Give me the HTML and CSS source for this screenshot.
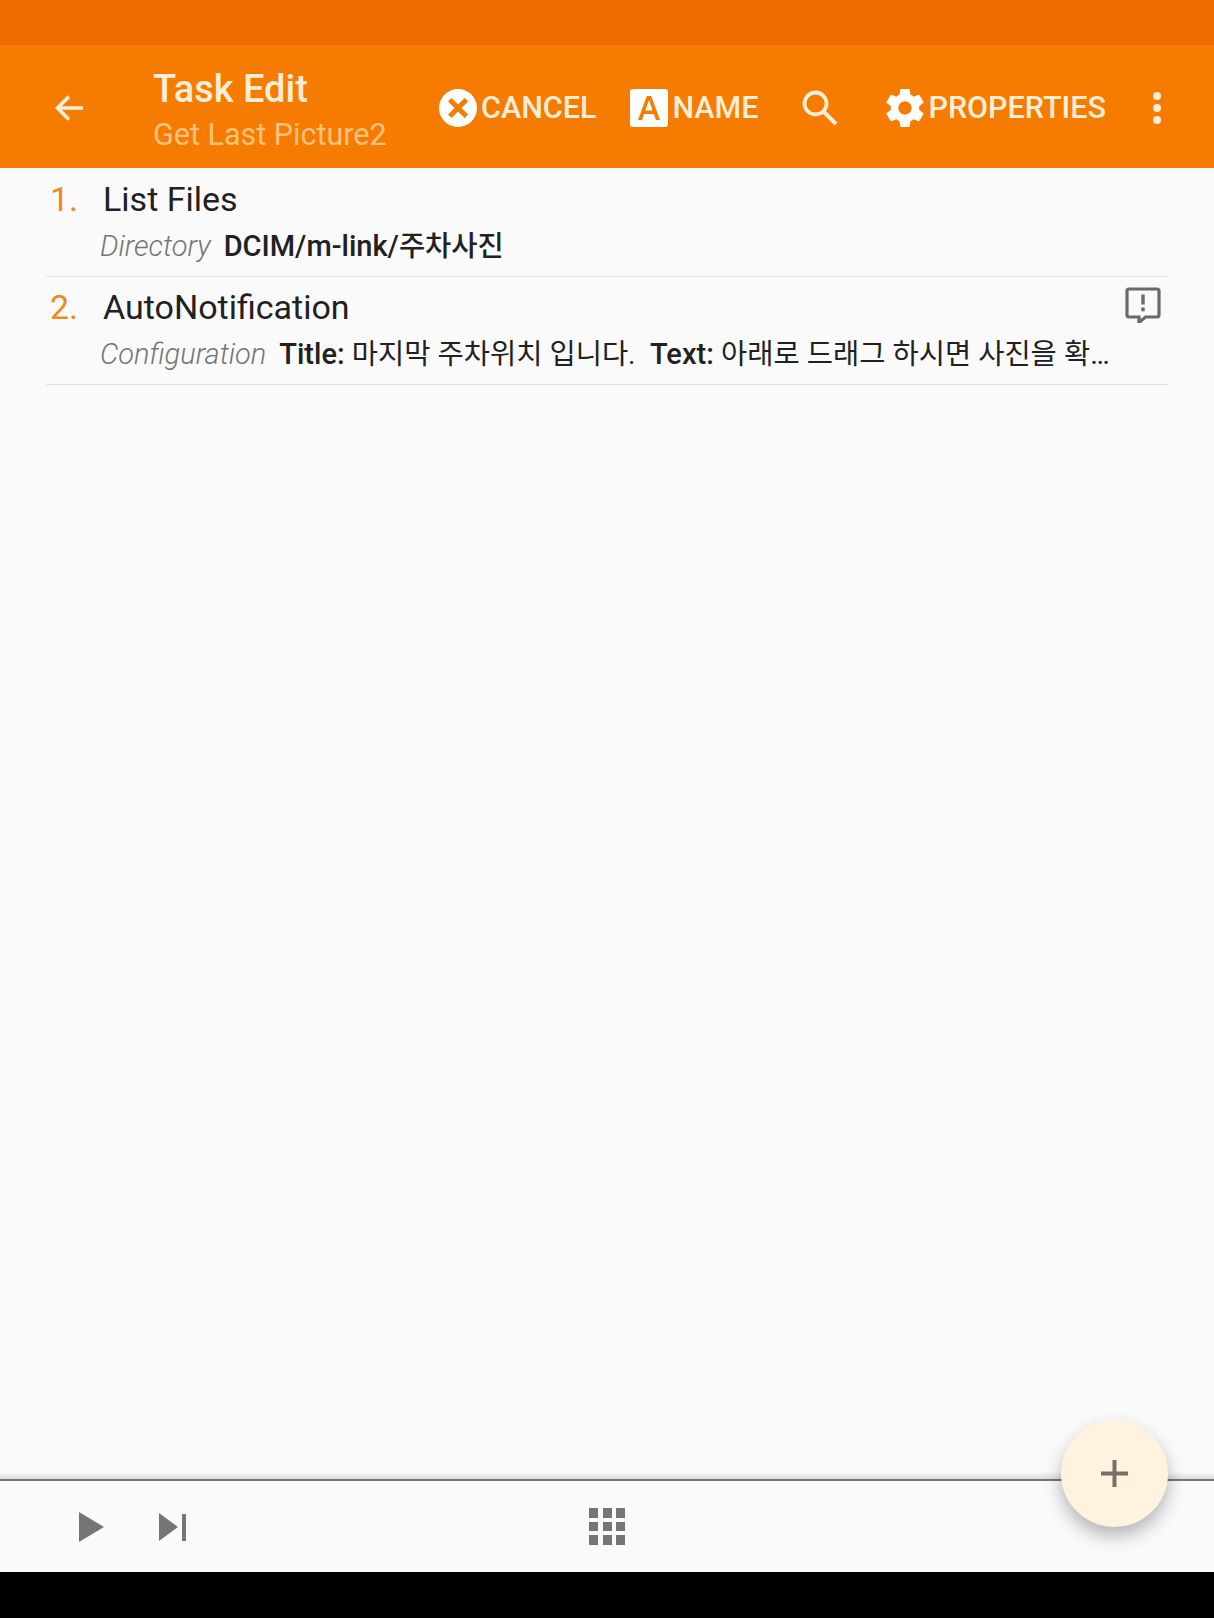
FILE: index.html
```html
<!DOCTYPE html>
<html lang="ko">
<head>
<meta charset="utf-8">
<title>Task Edit</title>
<link rel="stylesheet" href="styles.css">
</head>
<body>
<div class="screen">
  <div class="status"></div>
  <header class="toolbar">
    <svg class="back" viewBox="0 0 32 32"><path d="M29 16H4M15 4.500 3.500 16 15 27.500" fill="none" stroke="currentColor" stroke-width="3.600"/></svg>
    <div class="titles">
      <div class="title">Task Edit</div>
      <div class="subtitle">Get Last Picture2</div>
    </div>
    <div class="action act-cancel">
      <svg class="ico" viewBox="0 0 38 38"><path fill="#fff" fill-rule="evenodd" d="M19 0a19 19 0 1 0 0 38a19 19 0 1 0 0-38zM12.500 9 19 15.500 25.500 9 29 12.500 22.500 19 29 25.500 25.500 29 19 22.500 12.500 29 9 25.500 15.500 19 9 12.500z"/></svg>
      <span>CANCEL</span>
    </div>
    <div class="action act-name">
      <svg class="ico" viewBox="0 0 38 38"><path fill="#fff" fill-rule="evenodd" d="M3 0h32a3 3 0 0 1 3 3v32a3 3 0 0 1-3 3H3a3 3 0 0 1-3-3V3a3 3 0 0 1 3-3zM16.800 7 8 31h4l2.100-6h9.800l2.100 6h4L21.200 7zM15.400 21.500 19 11l3.600 10.500z"/></svg>
      <span>NAME</span>
    </div>
    <svg class="search" viewBox="0 0 36 36"><circle cx="13.500" cy="13.500" r="11" fill="none" stroke="currentColor" stroke-width="3.800"/><path d="M21.500 21.500 34 34" fill="none" stroke="currentColor" stroke-width="4"/></svg>
    <div class="action act-props">
      <svg class="ico" viewBox="2.400 2 19.200 20"><path fill="#fff" d="M19.430 12.980c.04-.32.07-.64.07-.98s-.03-.66-.07-.98l2.110-1.650c.19-.15.24-.42.12-.64l-2-3.460c-.12-.22-.39-.3-.61-.22l-2.490 1c-.52-.4-1.080-.73-1.690-.98l-.38-2.650A.488.488 0 0 0 14 2h-4c-.25 0-.46.180-.49.420l-.38 2.650c-.61.250-1.170.590-1.690.980l-2.490-1c-.23-.090-.49 0-.61.220l-2 3.460c-.13.220-.07.490.12.640l2.110 1.650c-.04.320-.07.650-.07.980s.03.660.07.980l-2.110 1.650c-.19.150-.24.420-.12.640l2 3.460c.12.220.39.300.61.220l2.490-1c.52.400 1.080.730 1.690.980l.38 2.650c.03.240.24.420.49.420h4c.25 0 .46-.180.49-.420l.38-2.650c.61-.250 1.170-.590 1.690-.980l2.490 1c.23.090.49 0 .61-.220l2-3.460c.12-.220.07-.490-.12-.640l-2.110-1.650zM12 15.500c-1.930 0-3.500-1.570-3.500-3.500s1.570-3.500 3.500-3.500 3.500 1.570 3.500 3.500-1.570 3.500-3.500 3.500z"/></svg>
      <span>PROPERTIES</span>
    </div>
    <div class="more"><i></i><i></i><i></i></div>
  </header>
  <main class="list">
    <section class="row">
      <div class="row-main">
        <div class="head"><span class="num">1.</span><span class="name">List Files</span></div>
        <div class="detail"><em>Directory</em><b>DCIM/m-link/<span class="ko">주차사진</span></b></div>
      </div>
      <div class="side"></div>
    </section>
    <section class="row">
      <div class="row-main">
        <div class="head"><span class="num">2.</span><span class="name">AutoNotification</span></div>
        <div class="detail"><em>Configuration</em><span class="clip"><b>Title:</b> <span class="ko">마지막 주차위치 입니다.</span>&nbsp; <b>Text:</b> <span class="ko">아래로 드래그 하시면 사진을 확인할 수 있습니다</span></span></div>
      </div>
      <div class="side">
        <svg class="alert" viewBox="0 0 36 36"><path d="M4 2h28a2 2 0 0 1 2 2v24a2 2 0 0 1-2 2H20.500L14 35.500V30H4a2 2 0 0 1-2-2V4a2 2 0 0 1 2-2z" fill="none" stroke="#6a6a6a" stroke-width="3.200"/><path d="M16.300 7.500h3.400v10h-3.400zM16.300 20.500h3.400v3.800h-3.400z" fill="#6a6a6a"/></svg>
      </div>
    </section>
  </main>
  <footer class="bottom">
    <div class="controls">
      <svg class="play" viewBox="0 0 25 30"><path d="M0 0 25 15 0 30z"/></svg>
      <svg class="step" viewBox="0 0 27 28"><path d="M0 0 19 14 0 28zM23 1h4v27h-4z"/></svg>
    </div>
    <div class="grid"><i></i><i></i><i></i><i></i><i></i><i></i><i></i><i></i><i></i></div>
  </footer>
  <div class="nav"></div>
  <button class="fab" type="button"><svg viewBox="0 0 27 27"><path d="M11.500 0h4v11.500H27v4H15.500V27h-4V15.500H0v-4h11.500z"/></svg></button>
</div>
</body>
</html>
```
FILE: styles.css
```css
* { box-sizing: border-box; }
html, body { margin: 0; padding: 0; }
body { font-family: Roboto, "Noto Sans CJK KR", sans-serif; background: #fafafa; }
.screen { position: relative; width: 1214px; height: 1618px; display: flex; flex-direction: column; overflow: hidden; background: #fafafa; }
.status { height: 45px; background: #ef6c00; flex: none; }
.toolbar { height: 123px; flex: none; background: #f57c00; color: #ffedd6; display: flex; align-items: center; padding: 3px 0 0 54px; }
.back { width: 32px; height: 32px; flex: none; }
.titles { margin-left: 67px; width: 286px; flex: none; }
.title { font-size: 38px; font-weight: 500; line-height: 44px; margin-top: 3px; }
.subtitle { font-size: 30.500px; line-height: 36px; color: #ffc27d; margin-top: 6px; }
.action { display: flex; align-items: center; flex: none; font-size: 30.500px; line-height: 38px; font-weight: 500; }
.action span { margin-left: 4px; }
.ico { width: 38px; height: 38px; flex: none; }
.act-name { margin-left: 34px; }
.search { width: 36px; height: 36px; margin-left: 44px; flex: none; margin-top: -1px; }
.act-props { margin-left: 48px; }
.more { margin-left: 47px; display: flex; flex-direction: column; gap: 4px; }
.more i { display: block; width: 8px; height: 8px; border-radius: 50%; background: #ffedd6; }
.list { flex: 1; padding: 0 46px; }
.row { display: flex; height: 108.500px; border-bottom: 1px solid #e2e2e2; }
.row-main { flex: 1; min-width: 0; }
.row + .row .row-main { margin-top: -1px; }
.side { width: 58px; flex: none; padding: 10px 0 0 15px; }
.alert { display: block; width: 36px; height: 36px; }
.head { display: flex; align-items: baseline; height: 62px; line-height: 62px; font-size: 34px; color: #212121; }
.num { color: #ef8a1a; width: 57px; padding-left: 4px; flex: none; }
.detail { display: flex; align-items: baseline; padding-left: 54px; font-size: 29px; line-height: 32px; color: #212121; }
.detail em { color: #757575; margin-right: 13px; flex: none; font-weight: 300; }
.detail b { font-weight: 500; }
.ko { font-size: 28.500px; }
.clip { flex: 1; min-width: 0; white-space: nowrap; overflow: hidden; text-overflow: ellipsis; }
.bottom { height: 93px; flex: none; border-top: 2px solid #777; position: relative; display: flex; align-items: center; justify-content: center; background: #fafafa; }
.bottom::before { content: ""; position: absolute; left: 0; right: 0; top: -9px; height: 7px; background: linear-gradient(to bottom, rgba(0,0,0,0), rgba(0,0,0,.13)); }
.controls { position: absolute; left: 79px; top: 0; bottom: 0; display: flex; align-items: center; gap: 55px; }
.play { width: 25px; height: 30px; fill: #757575; display: block; }
.step { width: 27px; height: 28px; fill: #757575; display: block; }
.grid { display: grid; grid-template-columns: repeat(3, 9px); grid-auto-rows: 9.500px; column-gap: 4.500px; row-gap: 4px; }
.grid i { display: block; background: #757575; }
.nav { height: 46px; flex: none; background: #000; }
.fab { position: absolute; left: 1061px; top: 1420px; width: 107px; height: 107px; border: 0; padding: 0; border-radius: 50%; background: #fff3e0; box-shadow: 0 9px 18px rgba(0,0,0,.28); display: flex; align-items: center; justify-content: center; }
.fab svg { width: 27px; height: 27px; fill: #757167; display: block; }
```
